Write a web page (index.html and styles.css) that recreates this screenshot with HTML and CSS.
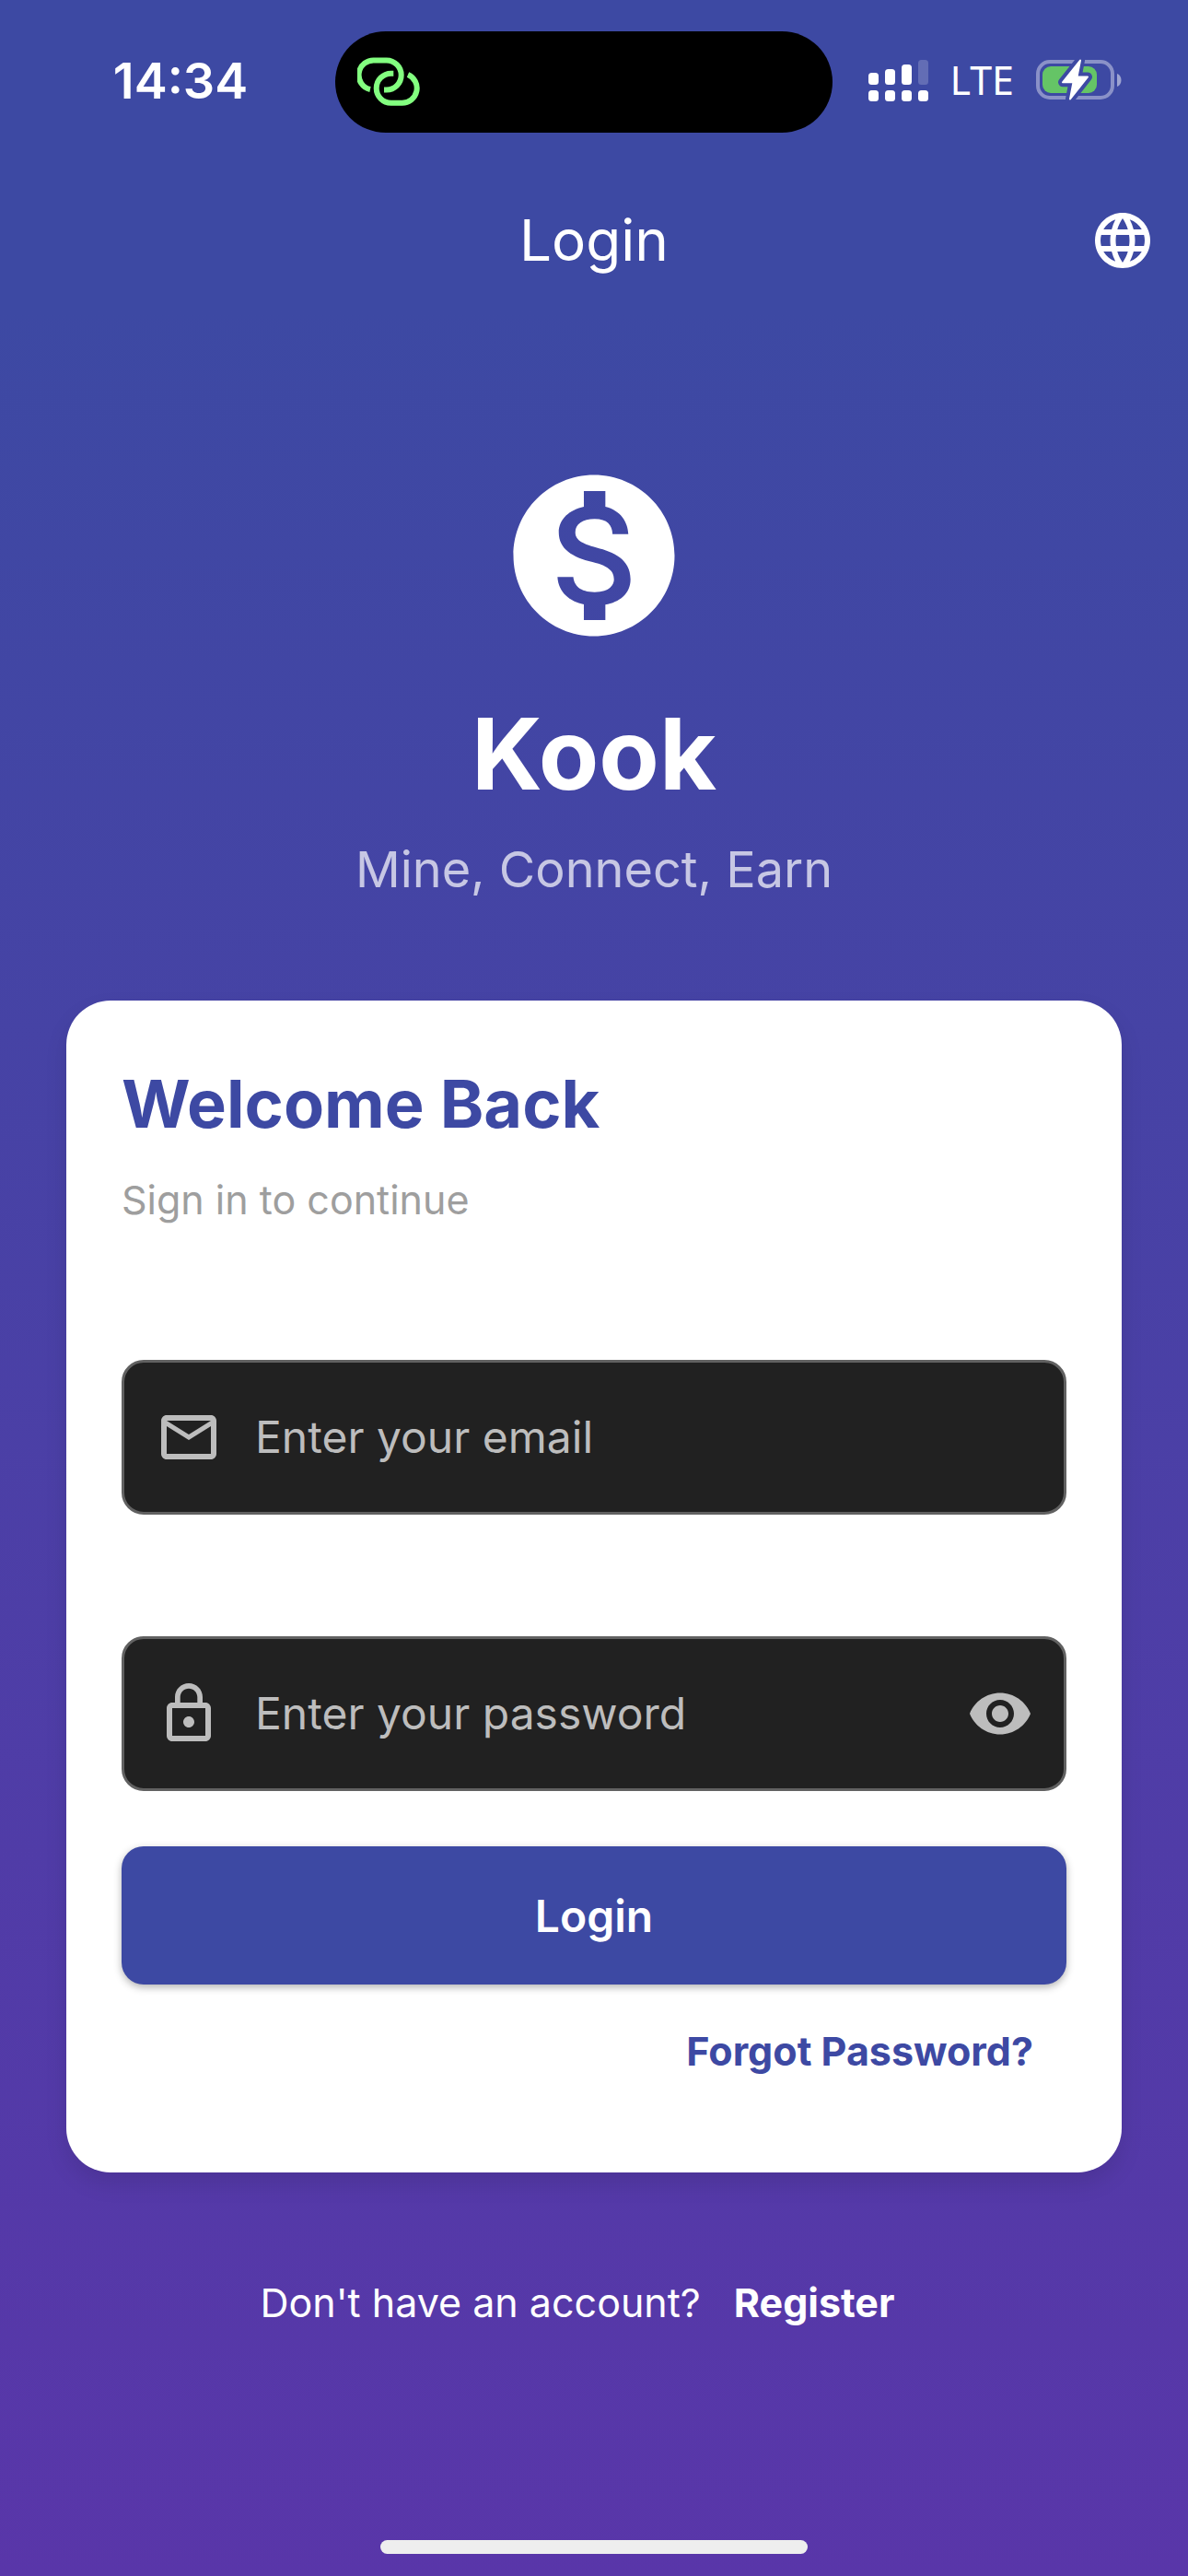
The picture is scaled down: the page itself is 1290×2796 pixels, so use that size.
FILE: index.html
```html
<!DOCTYPE html>
<html lang="en">
<head>
  <meta charset="utf-8">
  <meta name="viewport" content="width=device-width, initial-scale=1">
  <title>Kook - Login</title>
  <link rel="stylesheet" href="styles.css">
</head>
<body>
  <div class="screen">
    <div class="status-bar">
      <div class="status-time">14:34</div>
      <div class="island">
        <svg class="island-icon" viewBox="0 0 68 54" aria-hidden="true">
          <path d="M14 35A16 16 0 0 1 19.3 3.5H31.7A16 16 0 0 1 31.7 35.5H29"/>
          <path d="M39.3 17.7H36.7A16 16 0 0 0 36.7 49.7H48.3A16 16 0 0 0 55 19"/>
        </svg>
      </div>
      <div class="status-right">
        <svg class="signal" viewBox="0 0 65 45" aria-hidden="true">
          <rect x="0" y="14" width="11" height="13" rx="3.5"/>
          <rect x="18" y="10" width="11" height="17" rx="3.5"/>
          <rect x="36" y="5" width="11" height="22" rx="3.5"/>
          <rect x="54" y="0" width="11" height="27" rx="3.5" opacity=".2"/>
          <rect x="0" y="33" width="11" height="12" rx="3.5"/>
          <rect x="18" y="33" width="11" height="12" rx="3.5"/>
          <rect x="36" y="33" width="11" height="12" rx="3.5"/>
          <rect x="54" y="33" width="11" height="12" rx="3.5"/>
        </svg>
        <span class="network">LTE</span>
        <svg class="battery" viewBox="0 0 93 46" aria-hidden="true">
          <mask id="bolt-gap">
            <rect width="93" height="46" fill="#fff"/>
            <path d="M48 1.500L29 25.300H40.500L37 43.500L56 19.500H44.500Z" fill="#000" stroke="#000" stroke-width="10" stroke-linejoin="round"/>
          </mask>
          <g mask="url(#bolt-gap)">
            <rect x="2" y="3" width="81" height="39" rx="13" fill="none" stroke="#fff" stroke-opacity=".4" stroke-width="4"/>
            <rect x="7" y="8" width="59" height="29" rx="9" fill="#65c466"/>
          </g>
          <path d="M88 16C94 18 94 28 88 30Z" fill="#fff" fill-opacity=".5"/>
          <path d="M48 1.500L29 25.300H40.500L37 43.500L56 19.500H44.500Z" fill="#fff" stroke="#fff" stroke-width="2" stroke-linejoin="round"/>
        </svg>
      </div>
    </div>

    <header class="app-bar">
      <h1 class="app-title">Login</h1>
      <button class="icon-button" type="button" aria-label="Change language">
        <svg class="icon" viewBox="0 0 24 24" aria-hidden="true"><path d="M11.990 2C6.470 2 2 6.480 2 12s4.470 10 9.990 10C17.520 22 22 17.520 22 12S17.520 2 11.990 2zm6.930 6h-2.950c-.32-1.250-.78-2.450-1.380-3.560 1.840.63 3.370 1.910 4.330 3.560zM12 4.040c.83 1.200 1.480 2.530 1.910 3.960h-3.820c.43-1.430 1.080-2.760 1.910-3.960zM4.260 14C4.100 13.360 4 12.690 4 12s.1-1.360.26-2h3.380c-.08.66-.14 1.320-.14 2s.06 1.340.14 2H4.260zm.82 2h2.950c.32 1.250.78 2.450 1.380 3.560-1.840-.63-3.370-1.900-4.330-3.560zm2.950-8H5.080c.96-1.660 2.490-2.930 4.330-3.560C8.810 5.550 8.350 6.750 8.030 8zM12 19.960c-.83-1.200-1.480-2.530-1.910-3.960h3.820c-.43 1.430-1.080 2.760-1.910 3.960zM14.340 14H9.660c-.09-.66-.16-1.320-.16-2s.07-1.350.16-2h4.680c.09.65.16 1.320.16 2s-.07 1.340-.16 2zm.25 5.560c.6-1.110 1.060-2.310 1.380-3.560h2.950c-.96 1.650-2.490 2.930-4.330 3.560zM16.360 14c.08-.66.14-1.320.14-2s-.06-1.340-.14-2h3.380c.16.64.26 1.310.26 2s-.1 1.360-.26 2h-3.380z"/></svg>
      </button>
    </header>

    <main class="content">
      <section class="brand">
        <svg class="logo" viewBox="0 0 24 24" aria-hidden="true"><path d="M12 2C6.480 2 2 6.480 2 12s4.480 10 10 10 10-4.480 10-10S17.520 2 12 2zm1.410 16.090V20h-2.670v-1.930c-1.710-.36-3.160-1.460-3.270-3.400h1.960c.1 1.050.82 1.870 2.650 1.870 1.960 0 2.400-.98 2.400-1.590 0-.83-.44-1.610-2.670-2.140-2.480-.6-4.180-1.620-4.180-3.670 0-1.720 1.390-2.840 3.110-3.210V4h2.670v1.950c1.860.45 2.790 1.860 2.850 3.390H14.300c-.05-1.110-.64-1.870-2.220-1.870-1.500 0-2.400.68-2.400 1.640 0 .84.65 1.390 2.670 1.910s4.180 1.390 4.180 3.910c-.01 1.830-1.380 2.830-3.120 3.160z"/></svg>
        <p class="brand-name">Kook</p>
        <p class="tagline">Mine, Connect, Earn</p>
      </section>

      <form class="card">
        <h2 class="card-title">Welcome Back</h2>
        <p class="card-subtitle">Sign in to continue</p>
        <div class="fields">
          <div class="field">
            <svg class="icon" viewBox="0 0 24 24" aria-hidden="true"><path d="M20 4H4c-1.100 0-1.990.9-1.990 2L2 18c0 1.100.9 2 2 2h16c1.100 0 2-.9 2-2V6c0-1.100-.9-2-2-2zm0 14H4V8l8 5 8-5v10zm-8-7L4 6h16l-8 5z"/></svg>
            <input class="field-input" type="email" placeholder="Enter your email" aria-label="Email">
          </div>
          <div class="field">
            <svg class="icon" viewBox="0 0 24 24" aria-hidden="true"><path d="M12 17c1.100 0 2-.9 2-2s-.9-2-2-2-2 .9-2 2 .9 2 2 2zm6-9h-1V6c0-2.760-2.240-5-5-5S7 3.240 7 6v2H6c-1.100 0-2 .9-2 2v10c0 1.100.9 2 2 2h12c1.100 0 2-.9 2-2V10c0-1.100-.9-2-2-2zM8.900 6c0-1.710 1.390-3.100 3.100-3.100s3.100 1.390 3.100 3.100v2H8.900V6zM18 20H6V10h12v10z"/></svg>
            <input class="field-input" type="password" placeholder="Enter your password" aria-label="Password">
            <button class="icon-button" type="button" aria-label="Show password">
              <svg class="icon" viewBox="0 0 24 24" aria-hidden="true"><path d="M12 4.500C7 4.500 2.730 7.610 1 12c1.730 4.390 6 7.500 11 7.500s9.270-3.110 11-7.500c-1.730-4.390-6-7.500-11-7.500zM12 17c-2.760 0-5-2.240-5-5s2.240-5 5-5 5 2.240 5 5-2.240 5-5 5zm0-8c-1.660 0-3 1.340-3 3s1.340 3 3 3 3-1.340 3-3-1.340-3-3-3z"/></svg>
            </button>
          </div>
        </div>
        <button class="submit" type="submit">Login</button>
        <a class="forgot" href="#forgot">Forgot Password?</a>
      </form>

      <p class="register">Don't have an account?<a class="register-link" href="#register">Register</a></p>
    </main>

    <div class="home-indicator"></div>
  </div>
</body>
</html>
```
FILE: styles.css
```css
:root {
  --indigo: #3d49a3;
  --purple: #5936a9;
  --grey: #bdbdbd;
}

* {
  box-sizing: border-box;
}

body,
h1,
h2,
p {
  margin: 0;
}

body {
  font-family: "Inter", "Liberation Sans", sans-serif;
  color: #fff;
}

button {
  border: 0;
  padding: 0;
  background: none;
  color: inherit;
  font: inherit;
  cursor: pointer;
}

a {
  text-decoration: none;
}

.screen {
  display: flex;
  flex-direction: column;
  min-height: 100vh;
  background: linear-gradient(var(--indigo) 12%, var(--purple));
}

/* Device status bar */
.status-bar {
  display: grid;
  grid-template-columns: 1fr 540px 1fr;
  align-items: start;
  padding: 34px 22px 0 0;
  height: 177px;
}

.status-time {
  padding-left: 28px;
  font-size: 54px;
  font-weight: 600;
  line-height: 108px;
  text-align: center;
}

.island {
  display: flex;
  align-items: center;
  height: 110px;
  padding-left: 24px;
  border-radius: 55px;
  background: #000;
}

.island-icon {
  width: 68px;
  height: 54px;
  fill: none;
  stroke: #83ff80;
  stroke-width: 6;
}

.status-right {
  display: flex;
  align-items: center;
  justify-content: flex-end;
  gap: 24px;
  height: 106px;
  padding-right: 50px;
}

.signal {
  width: 65px;
  height: 45px;
  fill: #fff;
}

.network {
  font-family: "Noto Sans", sans-serif;
  font-size: 43px;
  line-height: 60px;
}

.battery {
  width: 93px;
  height: 46px;
}

/* App bar */
.app-bar {
  display: grid;
  grid-template-columns: 72px 1fr 72px;
  align-items: center;
  height: 168px;
  padding: 0 35px;
}

.app-title {
  grid-column: 2;
  font-size: 62px;
  font-weight: 400;
  line-height: 80px;
  text-align: center;
}

.icon-button {
  flex: none;
  height: 72px;
}

.icon {
  display: block;
  flex: none;
  width: 72px;
  height: 72px;
  fill: currentColor;
}

/* Page content */
.content {
  padding: 153px 72px 0;
}

.brand {
  display: flex;
  flex-direction: column;
  align-items: center;
  margin-bottom: 110px;
}

.logo {
  width: 210px;
  height: 210px;
  margin-bottom: 48px;
  fill: #fff;
}

.brand-name {
  margin-bottom: 32px;
  font-size: 107px;
  font-weight: 700;
  line-height: 124px;
}

.tagline {
  font-size: 54px;
  line-height: 64px;
  color: rgba(255, 255, 255, 0.7);
}

.card {
  display: flex;
  flex-direction: column;
  padding: 72px 60px 108px;
  border-radius: 48px;
  background: #fff;
  box-shadow: 0 12px 24px rgba(0, 0, 0, 0.1);
}

.card-title {
  margin-bottom: 40px;
  font-size: 72px;
  font-weight: 700;
  line-height: 80px;
  color: var(--indigo);
}

.card-subtitle {
  margin-bottom: 150px;
  font-size: 43px;
  line-height: 48px;
  color: #9e9e9e;
}

.fields {
  display: flex;
  flex-direction: column;
  gap: 132px;
  margin-bottom: 60px;
}

.field {
  display: flex;
  align-items: center;
  gap: 36px;
  height: 168px;
  padding: 0 33px 0 34px;
  border: 3px solid #616161;
  border-radius: 24px;
  background: #212121;
  color: var(--grey);
}

.field-input {
  flex: 1;
  min-width: 0;
  padding: 0;
  border: 0;
  outline: 0;
  background: none;
  color: inherit;
  font: inherit;
  font-size: 48px;
  line-height: 60px;
}

.field-input::placeholder {
  color: var(--grey);
  opacity: 1;
}

.submit {
  height: 150px;
  margin-bottom: 48px;
  border-radius: 24px;
  background: var(--indigo);
  box-shadow: 0 3px 8px rgba(0, 0, 0, 0.3);
  font-size: 48px;
  font-weight: 600;
}

.forgot {
  align-self: flex-end;
  padding: 0 36px;
  font-size: 43px;
  font-weight: 700;
  line-height: 48px;
  color: var(--indigo);
}

.register {
  margin-top: 117px;
  font-size: 43px;
  line-height: 48px;
  text-align: center;
}

.register-link {
  padding: 0 36px;
  color: inherit;
  font-weight: 700;
}

.home-indicator {
  align-self: center;
  width: 36%;
  height: 15px;
  margin: auto 0 24px;
  border-radius: 8px;
  background: #eee;
}
```
